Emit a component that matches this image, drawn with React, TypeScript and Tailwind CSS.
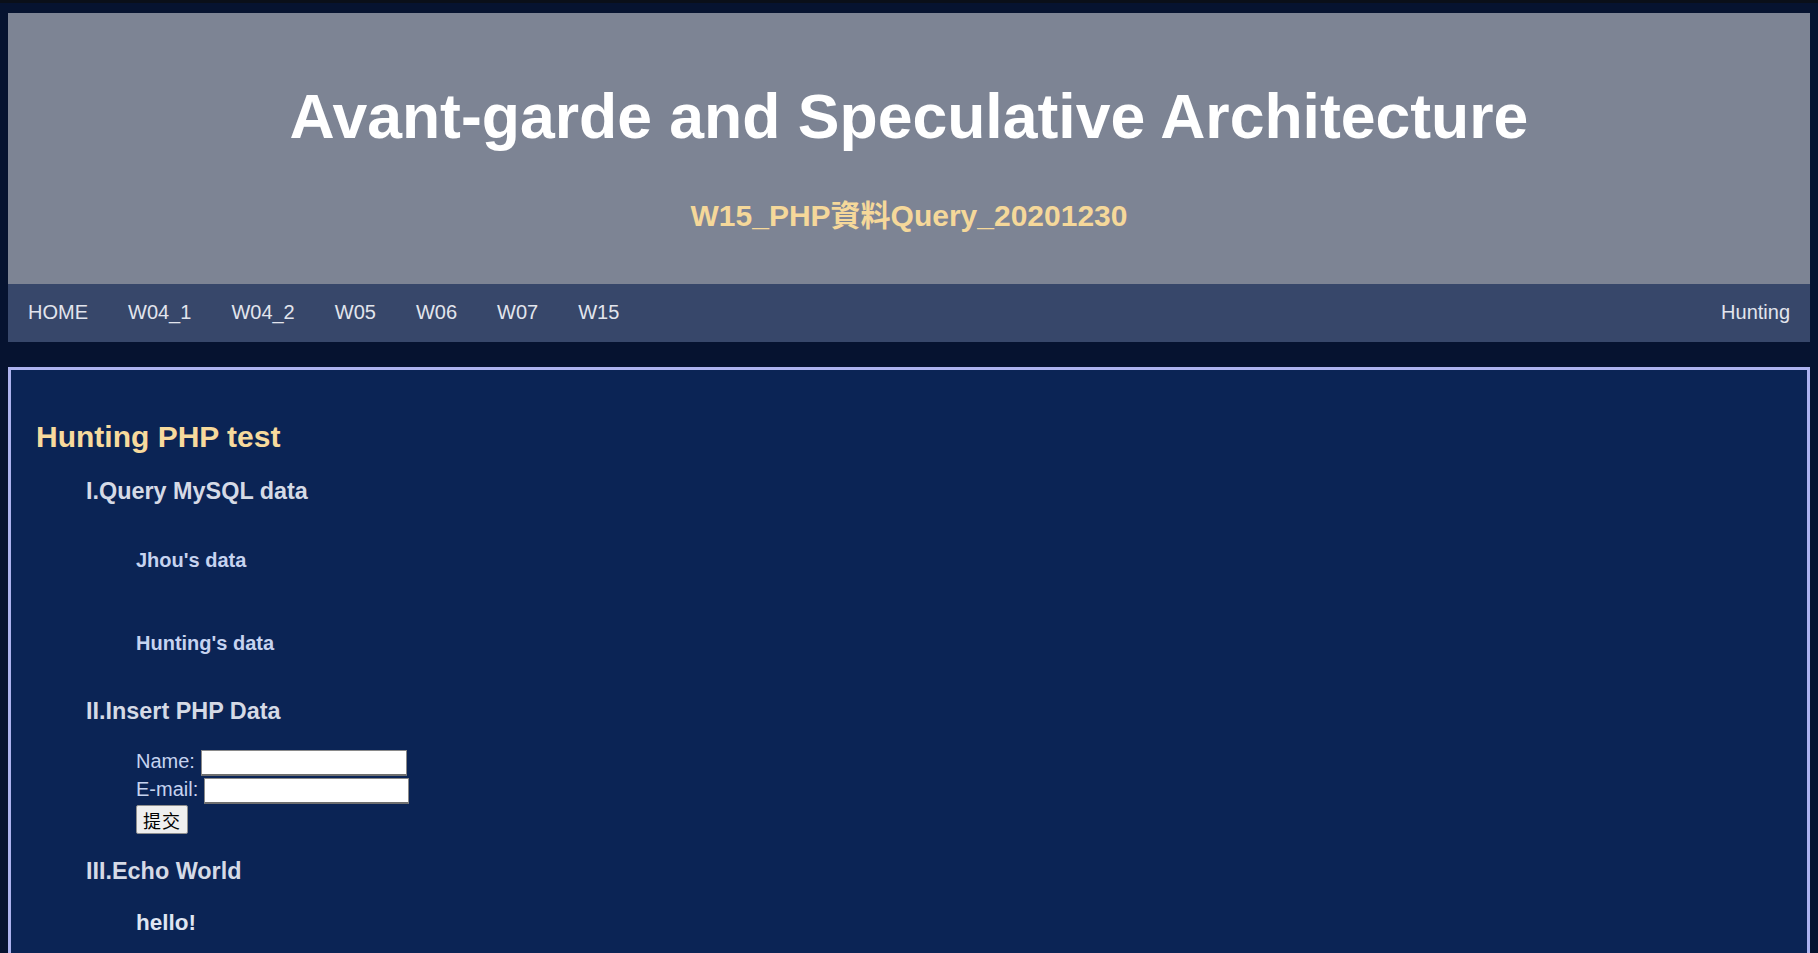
import React from "react";

const links = ["HOME", "W04_1", "W04_2", "W05", "W06", "W07", "W15"];

export default function App() {
  return (
    <div className="min-h-screen bg-[#061330] font-['Liberation_Sans','Noto_Sans_CJK_TC',Arial,sans-serif] pb-[200px]">
      <div className="h-[3px] bg-[#0a0f19]" />
      <header className="mx-[8px] mt-[10px] h-[271px] bg-[#7d8494] flex flex-col items-center pt-[72px]">
        <h1 className="text-[62.5px] leading-[62px] font-bold text-white whitespace-nowrap">
          Avant-garde and Speculative Architecture
        </h1>
        <h2 className="mt-[54px] text-[30px] leading-[30px] font-bold text-[#f5d89a] whitespace-nowrap">
          W15_PHP資料Query_20201230
        </h2>
      </header>
      <nav className="mx-[8px] h-[58px] bg-[#37476a] flex items-center justify-between pb-[2px]">
        <div className="flex">
          {links.map((l) => (
            <a key={l} className="px-[20px] text-[20px] leading-[23px] text-[#e2e5ed]">
              {l}
            </a>
          ))}
        </div>
        <a className="px-[20px] text-[20px] leading-[23px] text-[#e2e5ed]">Hunting</a>
      </nav>
      <main className="mx-[8px] mt-[25px] border-[3px] border-[#adb3ef] bg-[#0b2455] pl-[25px] pt-[52px] pb-[120px]">
        <h2 className="text-[30px] leading-[30px] font-bold text-[#f7da9d]">Hunting PHP test</h2>
        <h3 className="mt-[26px] ml-[50px] text-[23.4px] leading-[27px] font-bold text-[#d5dae6]">
          I.Query MySQL data
        </h3>
        <h4 className="mt-[44px] ml-[100px] text-[20px] leading-[23px] font-bold text-[#c6d3f0]">
          Jhou's data
        </h4>
        <h4 className="mt-[60px] ml-[100px] text-[20px] leading-[23px] font-bold text-[#c6d3f0]">
          Hunting's data
        </h4>
        <h3 className="mt-[43px] ml-[50px] text-[23.4px] leading-[27px] font-bold text-[#d5dae6]">
          II.Insert PHP Data
        </h3>
        <form className="mt-[25px] ml-[100px] flex flex-col items-start">
          <div className="flex items-start h-[27.5px]">
            <label className="text-[20px] leading-[23px] text-[#c6d3f0]">Name:</label>
            <input
              type="text"
              className="ml-[6px] w-[206px] h-[26px] bg-white border border-[#8a8a8a] border-b-2 border-b-[#6f6f6f] outline-none"
            />
          </div>
          <div className="flex items-start h-[27.5px]">
            <label className="text-[20px] leading-[23px] text-[#c6d3f0]">E-mail:</label>
            <input
              type="text"
              className="ml-[6px] w-[205px] h-[26.5px] bg-white border border-[#8a8a8a] border-b-2 border-b-[#6f6f6f] outline-none"
            />
          </div>
          <button
            type="button"
            className="w-[52px] h-[29px] bg-[#efefef] border border-[#8f8f8f] rounded-[2px] text-[18px] leading-[20px] tracking-[1px] text-black font-['Noto_Sans_CJK_TC',sans-serif]"
          >
            提交
          </button>
        </form>
        <h3 className="mt-[24px] ml-[50px] text-[23.4px] leading-[27px] font-bold text-[#d5dae6]">
          III.Echo World
        </h3>
        <h3 className="mt-[25px] ml-[100px] text-[22.5px] leading-[26px] font-bold text-[#dfe5f2]">
          hello!
        </h3>
      </main>
    </div>
  );
}
